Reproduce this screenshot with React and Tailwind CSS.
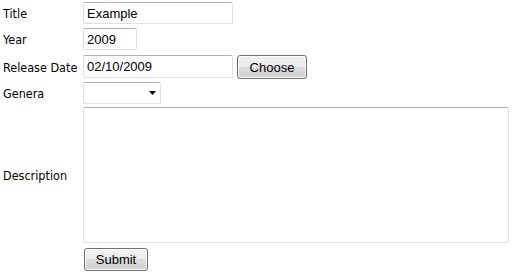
import React from "react";

const inputCls =
  "box-border border border-[#dcdfe4] border-t-[#adb0b6] rounded-[2px] bg-white px-[3px] text-[13px] text-black font-['Liberation_Sans',Arial,sans-serif] outline-none";

const btnCls =
  "box-border border border-[#707070] rounded-[3px] bg-[linear-gradient(to_bottom,#f2f2f2_0%,#ebebeb_50%,#dddddd_50%,#cfcfcf_100%)] shadow-[inset_0_0_0_1px_#fbfbfb] text-[13px] text-black font-['Liberation_Sans',Arial,sans-serif] leading-none flex items-center justify-center";

function Label({ children }) {
  return (
    <div className="w-[80px] shrink-0 text-[12.5px] text-black font-['DejaVu_Sans_Condensed','DejaVu_Sans',sans-serif] font-stretch-condensed leading-none pt-[3px]">
      {children}
    </div>
  );
}

export default function App() {
  return (
    <div className="w-[513px] h-[274px] bg-white pl-[3px] pt-[2px] flex flex-col">
      <div className="flex items-center h-[22px]">
        <Label>Title</Label>
        <input className={`${inputCls} w-[150px] h-[22px]`} defaultValue="Example" />
      </div>
      <div className="flex items-center h-[22px] mt-[4px]">
        <Label>Year</Label>
        <input className={`${inputCls} w-[54px] h-[22px]`} defaultValue="2009" />
      </div>
      <div className="flex items-start h-[24px] mt-[5px]">
        <div className="self-center pb-[1px]">
          <Label>Release Date</Label>
        </div>
        <input className={`${inputCls} w-[150px] h-[23px]`} defaultValue="02/10/2009" />
        <button className={`${btnCls} ml-[4px] w-[70px] h-[24px]`}>Choose</button>
      </div>
      <div className="flex items-center h-[22px] mt-[3px]">
        <Label>Genera</Label>
        <div className={`${inputCls} w-[78px] h-[22px] flex items-center justify-end pr-[4px]`}>
          <svg width="7" height="4" viewBox="0 0 7 4">
            <path d="M0 0H7L3.5 4Z" fill="#000" />
          </svg>
        </div>
      </div>
      <div className="flex items-center h-[136px] mt-[3px]">
        <Label>Description</Label>
        <textarea className={`${inputCls} w-[426px] h-[136px] resize-none`} />
      </div>
      <div className="flex items-center h-[23px] mt-[5px]">
        <div className="w-[81px] shrink-0" />
        <button className={`${btnCls} w-[64px] h-[23px]`}>Submit</button>
      </div>
    </div>
  );
}
